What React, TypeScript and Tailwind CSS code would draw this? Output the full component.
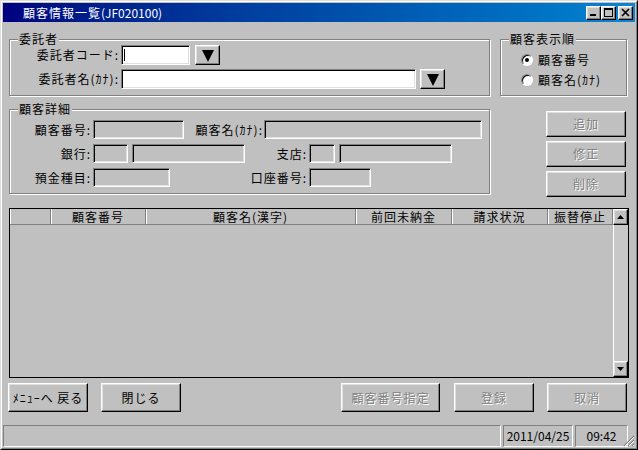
import React from "react";

const raised =
  "border border-t-white border-l-white border-r-black border-b-black shadow-[inset_-1px_-1px_0_#808080,inset_1px_1px_0_#dfdfdf]";
const sunken =
  "border border-t-[#808080] border-l-[#808080] border-r-white border-b-white shadow-[inset_1px_1px_0_#000,inset_-1px_-1px_0_#dfdfdf]";
const etched = "border border-[#808080] shadow-[inset_1px_1px_0_#fff,1px_1px_0_#fff]";
const statusPanel = "shrink-0 border border-t-[#808080] border-l-[#808080] border-r-white border-b-white";
const disabledText = "text-[#808080] [text-shadow:1px_1px_0_#fff]";

function Group({ title, className, children }: { title: string; className: string; children: React.ReactNode }) {
  return (
    <div className={`relative ${etched} ${className}`}>
      <span className="absolute -top-[7px] left-[8px] bg-[#c0c0c0] px-[1px] leading-[12px]">{title}</span>
      {children}
    </div>
  );
}

function Field({ className, white, caret }: { className: string; white?: boolean; caret?: boolean }) {
  return (
    <div className={`${sunken} ${white ? "bg-white" : "bg-[#c0c0c0]"} flex items-center pl-[2px] ${className}`}>
      {caret && <span className="w-[1px] h-[12px] bg-black" />}
    </div>
  );
}

function Button({ label, className, disabled }: { label: string; className: string; disabled?: boolean }) {
  return (
    <div className={`${raised} flex items-center justify-center whitespace-nowrap ${disabled ? disabledText : ""} ${className}`}>
      {label}
    </div>
  );
}

function DropButton({ className }: { className: string }) {
  return (
    <div className={`${raised} w-[25px] h-[20px] flex items-center justify-center ${className}`}>
      <svg width="12" height="13" viewBox="0 0 12 13">
        <polygon points="0,1 12,1 6,13" fill="#000" />
      </svg>
    </div>
  );
}

function Radio({ label, checked }: { label: string; checked?: boolean }) {
  return (
    <div className="h-[20px] flex items-center">
      <span className="w-[12px] h-[12px] rounded-full bg-white border border-t-[#808080] border-l-[#808080] border-r-white border-b-white shadow-[inset_1px_1px_0_#000] flex items-center justify-center">
        {checked && <span className="w-[4px] h-[4px] rounded-full bg-black" />}
      </span>
      <span className="ml-[5px]">{label}</span>
    </div>
  );
}

function TitleButton({ kind, className }: { kind: "min" | "max" | "close"; className?: string }) {
  return (
    <div className={`${raised} w-[15px] h-[14px] bg-[#c0c0c0] flex items-center justify-center ${className ?? ""}`}>
      <svg width="9" height="9" viewBox="0 0 9 9">
        {kind === "min" && <rect x="1" y="6" width="6" height="2" fill="#000" />}
        {kind === "max" && (
          <>
            <rect x="0" y="0" width="9" height="2" fill="#000" />
            <rect x="0.5" y="0.5" width="8" height="8" fill="none" stroke="#000" />
          </>
        )}
        {kind === "close" && (
          <path d="M1 1 L8 8 M8 1 L1 8" stroke="#000" strokeWidth="1.6" fill="none" />
        )}
      </svg>
    </div>
  );
}

function ScrollButton({ up }: { up?: boolean }) {
  return (
    <div className={`${raised} w-[15px] h-[16px] bg-[#c0c0c0] flex items-center justify-center`}>
      <svg width="7" height="4" viewBox="0 0 7 4">
        <polygon points={up ? "3.5,0 7,4 0,4" : "0,0 7,0 3.5,4"} fill="#000" />
      </svg>
    </div>
  );
}

const columns = [
  { label: "", w: "w-[41px]" },
  { label: "顧客番号", w: "w-[95px]" },
  { label: "顧客名(漢字)", w: "w-[210px]" },
  { label: "前回未納金", w: "w-[96px]" },
  { label: "請求状況", w: "w-[96px]" },
  { label: "振替停止", w: "flex-1" },
];

export default function App() {
  return (
    <div className="w-[638px] h-[450px] bg-[#c0c0c0] border border-t-[#dfdfdf] border-l-[#dfdfdf] border-r-black border-b-black font-['Noto_Sans_CJK_JP',sans-serif] text-[12px] leading-none tracking-[1px] text-black">
      <div className="h-full border border-t-white border-l-white border-r-[#808080] border-b-[#808080] p-[1px] flex flex-col">
        {/* title bar */}
        <div className="h-[19px] flex items-center bg-linear-to-r from-[#000080] to-[#1084d0] pl-[20px] pr-[2px]">
          <span className="text-white flex-1">
            顧客情報一覧<span className="tracking-normal">(JF020100)</span>
          </span>
          <TitleButton kind="min" />
          <TitleButton kind="max" />
          <TitleButton kind="close" className="ml-[2px]" />
        </div>

        <div className="flex flex-col px-[6px]">
          {/* 委託者 / 顧客表示順 */}
          <div className="flex mt-[17px] h-[57px]">
            <Group title="委託者" className="w-[481px] h-[57px]">
              <div className="flex flex-col gap-[4px] pt-[5px]">
                <div className="flex items-center h-[20px]">
                  <span className="w-[109px] text-right whitespace-nowrap">委託者コード:</span>
                  <Field white caret className="ml-[2px] w-[69px] h-[20px]" />
                  <DropButton className="ml-[5px]" />
                </div>
                <div className="flex items-center h-[20px]">
                  <span className="w-[109px] text-right whitespace-nowrap">委託者名(ｶﾅ):</span>
                  <Field white className="ml-[2px] w-[295px] h-[20px]" />
                  <DropButton className="ml-[4px]" />
                </div>
              </div>
            </Group>
            <Group title="顧客表示順" className="ml-[10px] w-[127px] h-[57px]">
              <div className="flex flex-col pt-[10px] pl-[20px]">
                <Radio label="顧客番号" checked />
                <Radio label="顧客名(ｶﾅ)" />
              </div>
            </Group>
          </div>

          {/* 顧客詳細 + action buttons */}
          <div className="flex items-start mt-[13px] h-[88px]">
            <Group title="顧客詳細" className="w-[481px] h-[85px]">
              <div className="flex flex-col gap-[5px] pt-[10px]">
                <div className="flex items-center h-[19px]">
                  <span className="w-[81px] text-right">顧客番号:</span>
                  <Field className="ml-[2px] w-[91px] h-[19px]" />
                  <span className="w-[79px] text-right whitespace-nowrap">顧客名(ｶﾅ):</span>
                  <Field className="ml-[1px] w-[218px] h-[19px]" />
                </div>
                <div className="flex items-center h-[19px]">
                  <span className="w-[81px] text-right">銀行:</span>
                  <Field className="ml-[2px] w-[35px] h-[19px]" />
                  <Field className="ml-[4px] w-[113px] h-[19px]" />
                  <span className="w-[62px] text-right">支店:</span>
                  <Field className="ml-[2px] w-[26px] h-[19px]" />
                  <Field className="ml-[4px] w-[113px] h-[19px]" />
                </div>
                <div className="flex items-center h-[19px]">
                  <span className="w-[81px] text-right">預金種目:</span>
                  <Field className="ml-[2px] w-[77px] h-[19px]" />
                  <span className="w-[137px] text-right">口座番号:</span>
                  <Field className="ml-[2px] w-[62px] h-[19px]" />
                </div>
              </div>
            </Group>
            <div className="ml-[56px] mt-[2px] flex flex-col gap-[4px]">
              <Button label="追加" disabled className="w-[80px] h-[26px]" />
              <Button label="修正" disabled className="w-[80px] h-[26px]" />
              <Button label="削除" disabled className="w-[80px] h-[26px]" />
            </div>
          </div>

          {/* list */}
          <div className="mt-[11px] w-[620px] h-[170px] border border-black flex">
            <div className="flex-1 flex flex-col">
              <div className="h-[16px] flex border-b border-b-[#808080]">
                {columns.map((c, i) => (
                  <div
                    key={i}
                    className={`${c.w} h-full flex items-center justify-center border-r border-r-[#808080] shadow-[inset_1px_0_0_#fff]`}
                  >
                    {c.label}
                  </div>
                ))}
              </div>
              <div className="flex-1" />
            </div>
            <div className="w-[15px] flex flex-col">
              <ScrollButton up />
              <div className="flex-1 border-l border-l-white bg-[#c8c8c8]" />
              <ScrollButton />
            </div>
          </div>

          {/* bottom buttons */}
          <div className="flex mt-[5px] h-[29px]">
            <Button label="ﾒﾆｭｰへ 戻る" className="-ml-[1px] w-[80px] h-[29px]" />
            <Button label="閉じる" className="ml-[13px] w-[80px] h-[29px]" />
            <Button label="顧客番号指定" disabled className="ml-[160px] w-[99px] h-[29px]" />
            <Button label="登録" disabled className="ml-[14px] w-[80px] h-[29px]" />
            <Button label="取消" disabled className="ml-[13px] w-[80px] h-[29px]" />
          </div>
        </div>

        {/* status bar */}
        <div className="mt-[13px] flex-1 flex tracking-normal">
          <div className={`w-[498px] ${statusPanel}`} />
          <div className={`ml-[2px] w-[70px] ${statusPanel} flex items-center justify-center`}>2011/04/25</div>
          <div className={`ml-[2px] w-[53px] ${statusPanel} flex items-center justify-center`}>09:42</div>
          <div className="relative flex-1 min-w-0">
            <svg className="absolute right-0 bottom-0" width="12" height="12" viewBox="0 0 12 12">
              <path d="M11 1 L1 11 M11 5 L5 11 M11 9 L9 11" stroke="#808080" strokeWidth="1.2" fill="none" />
              <path d="M11 2 L2 11 M11 6 L6 11 M11 10 L10 11" stroke="#fff" strokeWidth="1" fill="none" />
            </svg>
          </div>
        </div>
      </div>
    </div>
  );
}
